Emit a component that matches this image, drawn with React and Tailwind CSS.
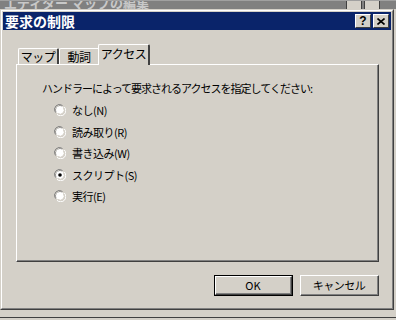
const jp = { fontFamily: '"Noto Sans CJK JP", "Noto Sans", sans-serif' };

const Radio = ({ checked }) => (
  <svg width="12" height="12" viewBox="0 0 12 12" className="shrink-0">
    <path d="M1.5 8.5 A5 5 0 0 1 8.5 1.5" fill="none" stroke="#808080" strokeWidth="1" />
    <path d="M2.5 7.8 A4 4 0 0 1 7.8 2.5" fill="none" stroke="#404040" strokeWidth="1" />
    <circle cx="6" cy="6" r="4" fill="#ffffff" />
    <path d="M3 10.3 A5 5 0 0 0 10.3 3" fill="none" stroke="#ffffff" strokeWidth="1" />
    <path d="M3.8 9.4 A4 4 0 0 0 9.4 3.8" fill="none" stroke="#d4d0c8" strokeWidth="1" />
    {checked && <circle cx="6" cy="6" r="1.8" fill="#000000" />}
  </svg>
);

const TitleButton = ({ children }) => (
  <div className="w-[16px] h-[14px] bg-[#d4d0c8] border-t border-l border-t-white border-l-white border-r border-b border-r-[#404040] border-b-[#404040] flex items-center justify-center text-black text-[12px] font-bold leading-none"
    style={{ fontFamily: '"Liberation Sans", sans-serif' }}>
    {children}
  </div>
);

const Tab = ({ label, active }) => (
  <div
    className={
      active
        ? 'w-[52px] h-[21px] -mb-px -ml-[2px] flex justify-center items-start pt-[2px] bg-[#d4d0c8] border-t border-l border-t-white border-l-white border-r-2 border-r-[#404040] rounded-tl-[2px] rounded-tr-[2px] relative z-10'
        : 'w-[41px] h-[16px] flex justify-center items-center bg-[#d4d0c8] border-t border-l border-t-white border-l-white border-r-2 border-r-[#404040] rounded-tl-[2px] rounded-tr-[2px]'
    }
  >
    <span className="text-[12px] leading-[14px] text-black whitespace-nowrap tracking-[-0.5px]">{label}</span>
  </div>
);

const options = ['なし(N)', '読み取り(R)', '書き込み(W)', 'スクリプト(S)', '実行(E)'];

export default function App() {
  return (
    <div className="w-[396px] h-[320px] bg-[#d4d0c8] overflow-hidden flex flex-col" style={jp}>
      {/* window behind the dialog */}
      <div className="h-[9px] bg-[#808080] border-t border-t-[#a0a0a0] overflow-hidden flex justify-between shrink-0 pl-[4px] pr-[16px]">
        <span className="text-[13px] font-bold leading-[14px] -mt-[5px] text-[#c8c8c8] whitespace-nowrap">エディター マップの編集</span>
        <div className="flex gap-[2px] -mt-[5px]">
          <div className="w-[16px] h-[14px] bg-[#d4d0c8] border border-[#404040]" />
          <div className="w-[16px] h-[14px] bg-[#d4d0c8] border border-[#404040]" />
        </div>
      </div>

      {/* dialog */}
      <div className="w-[394px] h-[301px] shrink-0 border border-t-[#d4d0c8] border-l-[#d4d0c8] border-r-[#404040] border-b-[#404040]">
        <div className="h-full border border-t-white border-l-white border-r-[#808080] border-b-[#808080] p-px flex flex-col">
          <div className="h-[18px] bg-[#0a246a] flex items-center justify-between pl-[2px] pr-[2px] shrink-0">
            <span className="text-white text-[14px] font-bold leading-none">要求の制限</span>
            <div className="flex gap-[2px]">
              <TitleButton>?</TitleButton>
              <TitleButton>
                <svg width="8" height="7" viewBox="0 0 8 7">
                  <path d="M0.5 0.5 L7.5 6.5 M7.5 0.5 L0.5 6.5" stroke="#000" strokeWidth="1.6" />
                </svg>
              </TitleButton>
            </div>
          </div>

          <div className="flex-1 pl-[13px] pr-[12px] pt-[13px] flex flex-col">
            <div className="flex items-end h-[21px] pl-[2px]">
              <Tab label="マップ" />
              <Tab label="動詞" />
              <Tab label="アクセス" active />
            </div>
            <div className="h-[198px] border-t border-l border-t-white border-l-white border-r border-b border-r-[#404040] border-b-[#404040]">
              <div className="h-full border-r border-b border-r-[#808080] border-b-[#808080] pl-[25px] pt-[15px]">
                <div className="text-[11px] leading-[16px] text-black tracking-[-1px] whitespace-nowrap">
                  ハンドラーによって要求されるアクセスを指定してください:
                </div>
                <div className="flex flex-col gap-[5.5px] mt-[6px] pl-[12px]">
                  {options.map((o, i) => (
                    <div key={o} className="flex items-center gap-[6px] h-[16px]">
                      <Radio checked={i === 3} />
                      <span className="text-[11px] leading-[16px] text-black tracking-[-0.5px]">{o}</span>
                    </div>
                  ))}
                </div>
              </div>
            </div>

            <div className="flex justify-end gap-[7px] mt-[13px]">
              <div className="w-[79px] h-[21px] border border-black">
                <div className="h-full border-t border-l border-t-white border-l-white border-r border-b border-r-[#404040] border-b-[#404040]">
                  <div className="h-full border-r border-b border-r-[#808080] border-b-[#808080] flex items-center justify-center text-[11px] text-black">OK</div>
                </div>
              </div>
              <div className="w-[79px] h-[21px] border-t border-l border-t-white border-l-white border-r border-b border-r-[#404040] border-b-[#404040]">
                <div className="h-full border-r border-b border-r-[#808080] border-b-[#808080] flex items-center justify-center text-[11px] text-black tracking-[-0.5px]">キャンセル</div>
              </div>
            </div>
          </div>
        </div>
      </div>
      <div className="h-[8px] shrink-0 border-b border-b-[#404040]" />
    </div>
  );
}
